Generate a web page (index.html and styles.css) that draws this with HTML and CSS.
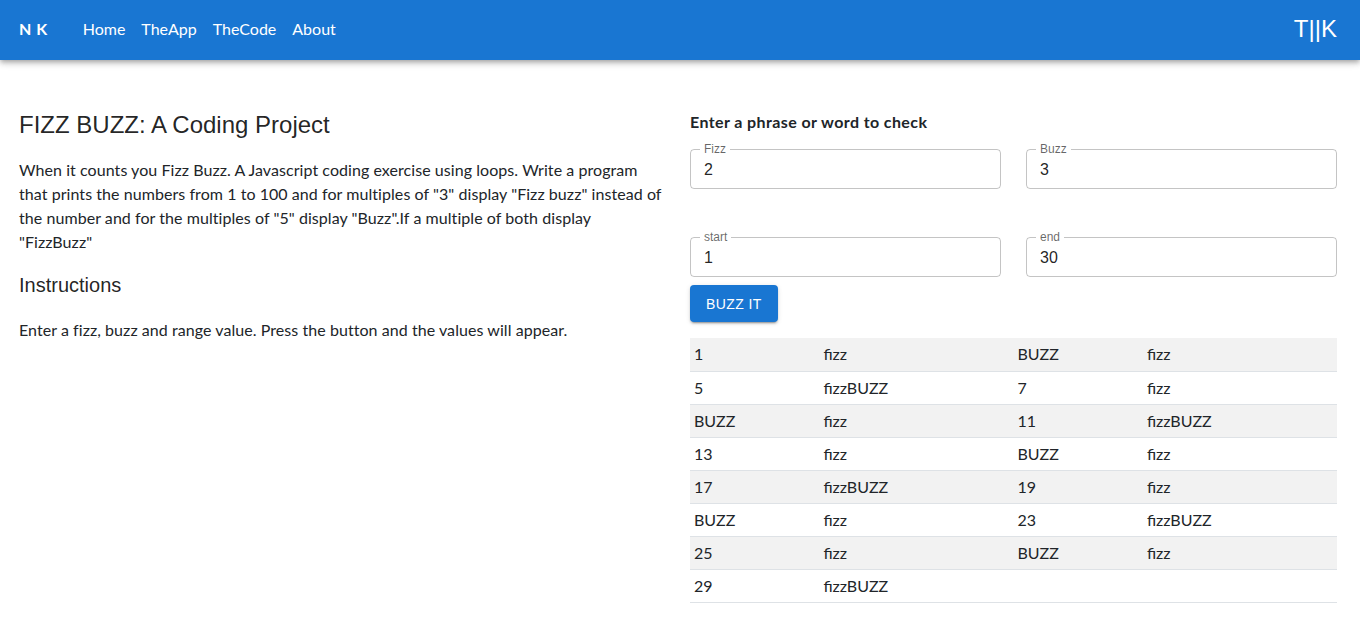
FILE: index.html
```html
<!DOCTYPE html>
<html lang="en">
<head>
<meta charset="utf-8">
<title>Fizz Buzz</title>
<link rel="stylesheet" href="styles.css">
</head>
<body>
<header class="appbar">
  <div class="brand">N K</div>
  <nav class="nav">
    <a class="nav-link" href="#">Home</a>
    <a class="nav-link" href="#">TheApp</a>
    <a class="nav-link" href="#">TheCode</a>
    <a class="nav-link" href="#">About</a>
  </nav>
  <div class="logo">T||K</div>
</header>
<main class="main">
  <section class="intro">
    <h1 class="title">FIZZ BUZZ: A Coding Project</h1>
    <p class="text">When it counts you Fizz Buzz. A Javascript coding exercise using loops. Write a program that prints the numbers from 1 to 100 and for multiples of "3" display "Fizz buzz" instead of the number and for the multiples of "5" display "Buzz".If a multiple of both display "FizzBuzz"</p>
    <h2 class="subtitle">Instructions</h2>
    <p class="text">Enter a fizz, buzz and range value. Press the button and the values will appear.</p>
  </section>
  <section class="app">
    <p class="prompt">Enter a phrase or word to check</p>
    <div class="fields">
      <div class="field"><span class="field-label">Fizz</span><span class="field-value">2</span></div>
      <div class="field"><span class="field-label">Buzz</span><span class="field-value">3</span></div>
      <div class="field"><span class="field-label">start</span><span class="field-value">1</span></div>
      <div class="field"><span class="field-label">end</span><span class="field-value">30</span></div>
    </div>
    <button class="btn" type="button">Buzz it</button>
    <table class="results">
      <colgroup><col class="c-narrow"><col class="c-wide"><col class="c-narrow"><col class="c-wide"></colgroup>
      <tbody>
        <tr><td>1</td><td>fizz</td><td>BUZZ</td><td>fizz</td></tr>
        <tr><td>5</td><td>fizzBUZZ</td><td>7</td><td>fizz</td></tr>
        <tr><td>BUZZ</td><td>fizz</td><td>11</td><td>fizzBUZZ</td></tr>
        <tr><td>13</td><td>fizz</td><td>BUZZ</td><td>fizz</td></tr>
        <tr><td>17</td><td>fizzBUZZ</td><td>19</td><td>fizz</td></tr>
        <tr><td>BUZZ</td><td>fizz</td><td>23</td><td>fizzBUZZ</td></tr>
        <tr><td>25</td><td>fizz</td><td>BUZZ</td><td>fizz</td></tr>
        <tr><td>29</td><td>fizzBUZZ</td><td></td><td></td></tr>
      </tbody>
    </table>
  </section>
</main>
</body>
</html>
```
FILE: styles.css
```css
* { box-sizing: border-box; }
html, body { margin: 0; padding: 0; }
body {
  font-family: "Lato", "Open Sans", sans-serif;
  font-size: 16px;
  line-height: 24px;
  color: #212529;
  background: #fff;
}
.appbar {
  height: 60px;
  background: #1976d2;
  color: #fff;
  display: flex;
  align-items: center;
  padding: 0 23px 0 19px;
  box-shadow: 0 2px 4px -1px rgba(0,0,0,0.2), 0 4px 5px 0 rgba(0,0,0,0.14), 0 1px 10px 0 rgba(0,0,0,0.12);
  position: relative;
  z-index: 1;
}
.brand {
  font-weight: 700;
  font-size: 16px;
  letter-spacing: 0.5px;
  margin-right: 27px;
  margin-top: -2px;
}
.nav { display: flex; flex: 1; margin-top: -2px; }
.nav-link {
  color: #fff;
  text-decoration: none;
  padding: 0 8px;
  font-size: 16px;
}
.logo {
  font-family: "Liberation Sans", Arial, sans-serif;
  font-size: 24px;
  margin-top: -2px;
}
.main {
  display: grid;
  grid-template-columns: 1fr 1fr;
  column-gap: 24px;
  padding: 49px 23px 0 19px;
}
.title {
  font-family: "Liberation Sans", Arial, sans-serif;
  font-weight: 400;
  font-size: 24px;
  line-height: 32px;
  color: rgba(0,0,0,0.87);
  margin: 0 0 17px;
}
.text { margin: 0; letter-spacing: 0.06px; }
.subtitle {
  font-family: "Liberation Sans", Arial, sans-serif;
  font-weight: 400;
  font-size: 20px;
  line-height: 32px;
  color: rgba(0,0,0,0.87);
  margin: 15px 0 17px;
}
.prompt {
  font-weight: 700;
  letter-spacing: 0.4px;
  margin: 1px 0 15px;
}
.fields {
  display: grid;
  grid-template-columns: 1fr 1fr;
  column-gap: 25px;
  row-gap: 48px;
}
.field {
  position: relative;
  height: 40px;
  border: 1px solid rgba(0,0,0,0.23);
  border-radius: 4px;
  display: flex;
  align-items: center;
  padding: 0 13px;
}
.field-label {
  position: absolute;
  top: -8px;
  left: 9px;
  padding: 0 4px;
  background: #fff;
  font-family: "Liberation Sans", Arial, sans-serif;
  font-size: 12px;
  line-height: 14px;
  color: rgba(0,0,0,0.6);
}
.field-value {
  font-family: "Liberation Sans", Arial, sans-serif;
  font-size: 16px;
  color: rgba(0,0,0,0.87);
  margin-top: 2px;
}
.btn {
  display: block;
  margin-top: 8px;
  height: 37px;
  padding: 0 16px;
  border: 0;
  border-radius: 4px;
  background: #1976d2;
  color: #fff;
  font-family: "Liberation Sans", Arial, sans-serif;
  font-weight: 400;
  font-size: 14px;
  letter-spacing: 0.4px;
  text-transform: uppercase;
  box-shadow: 0 3px 1px -2px rgba(0,0,0,0.2), 0 2px 2px 0 rgba(0,0,0,0.14), 0 1px 5px 0 rgba(0,0,0,0.12);
}
.results {
  width: 100%;
  margin-top: 16px;
  border-collapse: collapse;
  table-layout: fixed;
}
.c-narrow { width: 20%; }
.c-wide { width: 30%; }
.results td {
  padding: 4px 4px;
  border-bottom: 1px solid #dee2e6;
  line-height: 24px;
  height: 33px;
}
.results tr:nth-child(odd) td { background: #f2f2f2; }
```
